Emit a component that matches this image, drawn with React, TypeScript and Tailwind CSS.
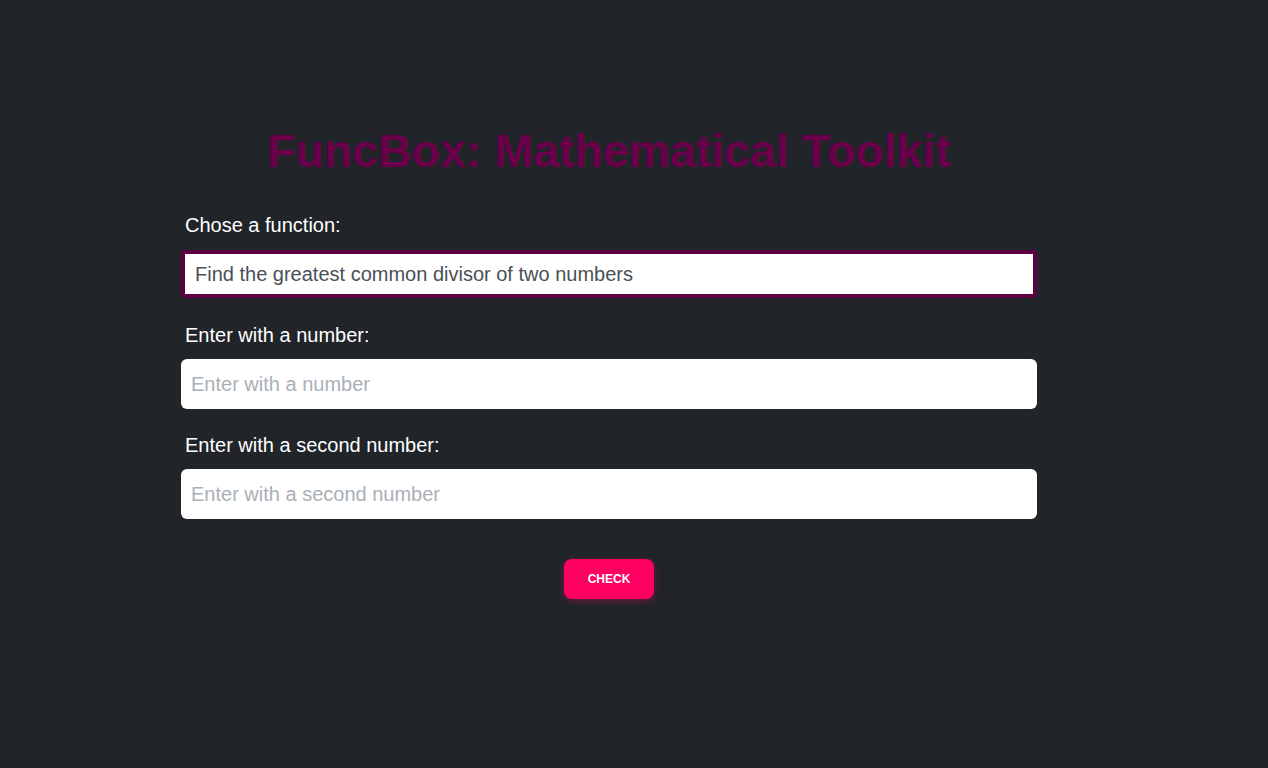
import React from 'react';

const font = { fontFamily: '"Liberation Sans", Arial, sans-serif' };

const Field: React.FC<{ label: string; className?: string; children: React.ReactNode }> = ({ label, className = "", children }) => (
    <div className={`flex flex-col ${className}`}>
        <label className="px-1 text-[20px] leading-[30px] text-white">{label}</label>
        {children}
    </div>
);

export default function App() {
    const [fn, setFn] = React.useState("gcd");
    const [a, setA] = React.useState("");
    const [b, setB] = React.useState("");

    return (
        <div className="min-h-[768px] w-full bg-[#212429]" style={font}>
            <div className="ml-[181px] flex w-[856px] flex-col pt-[122px]">
                <h1 className="text-center text-[46.5px] font-bold leading-[58px] text-[#6a0049]">
                    FuncBox: Mathematical Toolkit
                </h1>

                <div className="mt-[30px] flex flex-col">
                    <Field label="Chose a function:">
                        <div className="mt-[10px] rounded-[4px] border-[4px] border-[#5c0041] bg-white">
                            <select
                                value={fn}
                                onChange={e => setFn(e.target.value)}
                                className="h-[40px] w-full appearance-none bg-white px-[10px] text-[20px] text-[#495057] outline-none"
                                style={font}
                            >
                                <option value="gcd">Find the greatest common divisor of two numbers</option>
                                <option value="lcm">Find the least common multiple of two numbers</option>
                            </select>
                        </div>
                    </Field>

                    <Field label="Enter with a number:" className="mt-[22px]">
                        <input
                            type="text"
                            value={a}
                            onChange={e => setA(e.target.value)}
                            placeholder="Enter with a number"
                            className="mt-[9px] h-[50px] w-full rounded-[6px] bg-white px-[10px] text-[20px] text-[#495057] outline-none placeholder:text-[#aab0b7]"
                            style={font}
                        />
                    </Field>

                    <Field label="Enter with a second number:" className="mt-[21px]">
                        <input
                            type="text"
                            value={b}
                            onChange={e => setB(e.target.value)}
                            placeholder="Enter with a second number"
                            className="mt-[9px] h-[50px] w-full rounded-[6px] bg-white px-[10px] text-[20px] text-[#495057] outline-none placeholder:text-[#aab0b7]"
                            style={font}
                        />
                    </Field>
                </div>

                <div className="mt-[40px] flex justify-center">
                    <button
                        type="button"
                        className="h-[40px] w-[90px] rounded-[8px] bg-[#ff0062] text-[12px] font-bold text-white shadow-[0_2px_6px_rgba(255,0,98,0.35)]"
                        style={font}
                    >
                        CHECK
                    </button>
                </div>
            </div>
        </div>
    );
}
